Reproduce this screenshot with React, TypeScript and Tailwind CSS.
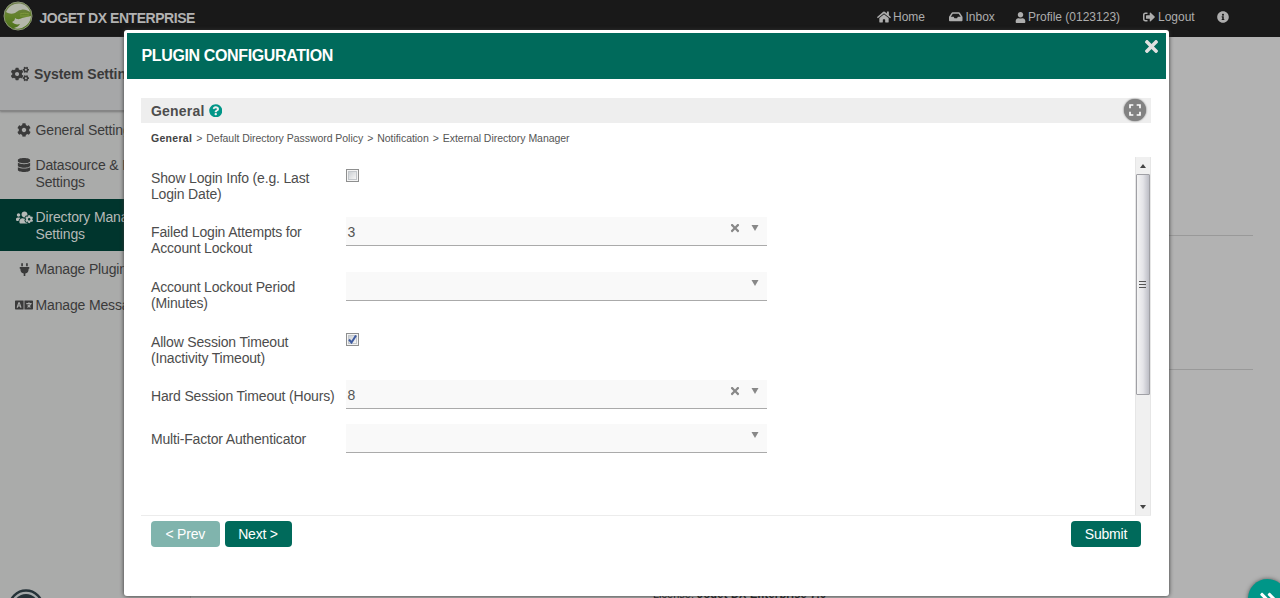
import type { ReactNode } from "react";
import {
  FaHome,
  FaInbox,
  FaUser,
  FaSignOutAlt,
  FaInfoCircle,
  FaCogs,
  FaCog,
  FaDatabase,
  FaUsersCog,
  FaPlug,
  FaLanguage,
  FaQuestionCircle,
  FaTimes,
  FaAngleDoubleRight,
} from "react-icons/fa";
import { MdFullscreen } from "react-icons/md";

function Logo() {
  return (
    <svg width="30" height="30" viewBox="0 0 30 30">
      <defs>
        <linearGradient id="ball" x1="0" y1="0" x2="0" y2="1">
          <stop offset="0" stopColor="#6f7d4c" />
          <stop offset="0.5" stopColor="#63822a" />
          <stop offset="1" stopColor="#4b701c" />
        </linearGradient>
      </defs>
      <circle cx="15" cy="15" r="14" fill="url(#ball)" stroke="#8c9678" strokeWidth="1" />
      <path d="M3 11C6 4 13 1.500 19 3c4 1 7 4 8 8-3-2-6-3-9-2-3 0-4 2-6 3-3 1-6 1-9-1z" fill="#b4b7aa" />
      <path d="M12 17c3 2 5 1 7 0 3-1 6-1 9-2 0 5-4 10-9 12-3 1-6 1-8 0 3-1 5-2 6-4-3 1-6 0-8-2 2-1 3-2 3-4z" fill="#b4b7aa" />
      <path d="M17 13c3-1 6-1 9 0M17 15h9" fill="none" stroke="#86a042" strokeWidth="0.8" />
    </svg>
  );
}

function TopBar() {
  return (
    <header className="flex h-[37px] shrink-0 items-center bg-[#191919] pr-[51px] text-[12px] text-[#adadad]">
      <div className="flex h-full w-[39.500px] shrink-0 items-start pl-[3px] pt-px">
        <Logo />
      </div>
      <h1 className="text-[14px] font-bold tracking-[-0.460px] text-[#b2b2b2]">JOGET DX ENTERPRISE</h1>
      <nav className="ml-auto flex items-center pb-[3px]">
        <span className="flex w-[72px] items-center gap-[2px]"><FaHome size={14} />Home</span>
        <span className="flex w-[66px] items-center gap-[3px]"><FaInbox size={13.500} />Inbox</span>
        <span className="flex w-[128px] items-center gap-[2px]"><FaUser size={11} />Profile (0123123)</span>
        <span className="flex w-[74px] items-center gap-[3px]"><FaSignOutAlt size={12} />Logout</span>
        <FaInfoCircle size={12} />
      </nav>
    </header>
  );
}

type MenuItem = { icon: ReactNode; lines: string[]; active?: boolean };

const menu: MenuItem[] = [
  { icon: <FaCog size={14} />, lines: ["General Settings"] },
  { icon: <FaDatabase size={14} />, lines: ["Datasource & Profile", "Settings"] },
  { icon: <FaUsersCog size={17} />, lines: ["Directory Manager", "Settings"], active: true },
  { icon: <FaPlug size={13} />, lines: ["Manage Plugins"] },
  { icon: <FaLanguage size={18} />, lines: ["Manage Messages"] },
];

function Sidebar() {
  return (
    <aside className="flex w-[191px] shrink-0 flex-col border-r border-[#999] bg-[#aaabaa] text-[14px] leading-[16.300px] tracking-[-0.150px] text-[#3a3a3a]">
      <div className="flex h-[74px] shrink-0 items-center gap-[5px] border-b border-[#858585] bg-[#a6a7a8] pl-[11px] pt-px font-bold tracking-[-0.050px] shadow-[0_1px_2px_#777]">
        <FaCogs size={18} />
        System Settings
      </div>
      <ul>
        {menu.map((item) => (
          <li
            key={item.lines[0]}
            className={
              item.active
                ? "flex bg-[#00352d] pt-[10.600px] pb-[8.800px] text-[#b5b9b7]"
                : "flex pt-[10.600px] pb-[8.800px]"
            }
          >
            <span className="ml-[12.500px] flex h-[16px] w-[23px] shrink-0 items-center justify-center">
              {item.icon}
            </span>
            <span className="flex flex-col whitespace-nowrap">
              {item.lines.map((line) => (
                <span key={line}>{line}</span>
              ))}
            </span>
          </li>
        ))}
      </ul>
      <div className="mt-auto flex h-[10px] justify-start overflow-hidden pl-[8px]">
        <svg width="36" height="36" viewBox="0 0 36 36" className="shrink-0">
          <circle cx="18" cy="19" r="16.500" fill="#a2a7a8" stroke="#253238" strokeWidth="2.500" />
          <circle cx="18" cy="19" r="13" fill="#253238" />
        </svg>
      </div>
    </aside>
  );
}

function Select({ value }: { value?: string }) {
  return (
    <div className="flex h-[29px] w-[421px] items-start border-b border-[#aaa] bg-[#f9f9f9] pl-[2px] text-[14px] text-[#555]">
      <span className="pt-[7px] leading-[17px]">{value}</span>
      <span className="ml-auto flex h-[22px] items-center pr-[8px]">
        {value && <FaTimes size={12} className="mr-[10px] text-[#888]" />}
        <svg width="8" height="6" viewBox="0 0 8 6"><path d="M0.500 0h7L4 6z" fill="#888" /></svg>
      </span>
    </div>
  );
}

function Checkbox({ checked }: { checked?: boolean }) {
  return (
    <span className="flex size-[13px] items-center justify-center border border-[#8e8f8f] bg-[#f4f4f4]">
      <span className="flex size-[9px] items-center justify-center border border-[#c3c7cb] bg-linear-to-br from-[#cdd1d5] to-[#f6f6f6]">
        {checked && (
          <svg width="9" height="9" viewBox="0 0 9 9" className="shrink-0">
            <path d="M1 4.500l2.500 3L8 .5" fill="none" stroke="#3f5ba0" strokeWidth="2" />
          </svg>
        )}
      </span>
    </span>
  );
}

function Row({ label, className, children }: { label: string[]; className: string; children: ReactNode }) {
  return (
    <div className={className}>
      <div className="flex w-[194.500px] shrink-0 flex-col whitespace-nowrap pt-[3px] tracking-[-0.170px]">
        {label.map((line) => (
          <span key={line}>{line}</span>
        ))}
      </div>
      {children}
    </div>
  );
}

function Scrollbar() {
  return (
    <div className="flex w-[16px] shrink-0 flex-col items-center border-x border-[#e6e6e6] bg-[#f0f0f0]">
      <div className="flex h-[17px] items-center">
        <svg width="6" height="4" viewBox="0 0 6 4"><path d="M0 4l3-4 3 4z" fill="#444" /></svg>
      </div>
      <div className="flex h-[221px] w-[14px] items-center justify-center rounded-[1px] border border-[#a0a0a5] bg-linear-to-r from-[#f4f4f4] via-[#e4e4e8] to-[#bdbec6] pr-px">
        <div className="flex w-[7px] flex-col gap-[2px]">
          <i className="h-px bg-[#555]" />
          <i className="h-px bg-[#555]" />
          <i className="h-px bg-[#555]" />
        </div>
      </div>
      <div className="mt-auto flex h-[16px] items-center">
        <svg width="6" height="4" viewBox="0 0 6 4"><path d="M0 0l3 4 3-4z" fill="#444" /></svg>
      </div>
    </div>
  );
}

function Dialog() {
  return (
    <section className="absolute left-[124px] top-[30px] z-10 flex h-[566px] w-[1045px] flex-col rounded-[3px] bg-white p-[3px] shadow-[0_0_4px_#333] text-[#4d4d4d]">
      <div className="flex h-[46px] shrink-0 items-center justify-between bg-[#006a5b] pl-[14.500px] pr-[5px] text-white">
        <h2 className="pb-px text-[16px] font-bold tracking-[-0.370px]">PLUGIN CONFIGURATION</h2>
        <FaTimes size={19} className="mb-[19px] text-[#e0e0e0]" />
      </div>
      <div className="mt-[19px] flex h-[25px] shrink-0 items-center bg-[#eee] ml-[14px] mr-[15px] pl-[10px] pr-[5px]">
        <h3 className="pt-px text-[14px] font-bold tracking-[0.200px]">General</h3>
        <FaQuestionCircle size={13.500} className="ml-[4px] text-[#009688]" />
        <span className="mb-[2px] ml-auto flex size-[22px] shrink-0 items-center justify-center rounded-full bg-[#828282] text-white shadow-[0_0_2px_#555]">
          <MdFullscreen size={20} className="shrink-0" />
        </span>
      </div>
      <div className="ml-[24px] mt-[9px] flex h-[13px] items-center gap-[4px] whitespace-nowrap text-[10.500px] leading-[13px] tracking-[-0.040px] text-[#555]">
        <b className="tracking-[0.300px] text-[#444]">General</b>
        <span>&gt;</span>
        <span>Default Directory Password Policy</span>
        <span>&gt;</span>
        <span>Notification</span>
        <span>&gt;</span>
        <span>External Directory Manager</span>
      </div>
      <div className="ml-[14px] mr-[15px] mt-[12px] flex h-[359px] shrink-0 border-b border-[#ececec]">
        <div className="flex grow flex-col pl-[10px] pt-[10px] text-[14px] leading-[16.300px]">
          <Row className="flex h-[50px]" label={["Show Login Info (e.g. Last", "Login Date)"]}>
            <div className="pt-[2px]"><Checkbox /></div>
          </Row>
          <Row className="flex h-[55px] [&>div:first-child]:pt-[7px]" label={["Failed Login Attempts for", "Account Lockout"]}>
            <Select value="3" />
          </Row>
          <Row className="flex h-[58px] [&>div:first-child]:pt-[7px]" label={["Account Lockout Period", "(Minutes)"]}>
            <Select />
          </Row>
          <Row className="flex h-[50px] [&>div:first-child]:pt-[4px]" label={["Allow Session Timeout", "(Inactivity Timeout)"]}>
            <div className="pt-[3px]"><Checkbox checked /></div>
          </Row>
          <Row className="flex h-[44px] [&>div:first-child]:pt-[8px]" label={["Hard Session Timeout (Hours)"]}>
            <Select value="8" />
          </Row>
          <Row className="flex h-[44px] [&>div:first-child]:pt-[7px]" label={["Multi-Factor Authenticator"]}>
            <Select />
          </Row>
        </div>
        <Scrollbar />
      </div>
      <div className="ml-[24px] mr-[25px] mt-[5px] flex gap-[5px] text-[14px] tracking-[-0.200px] text-white">
        <button className="h-[26px] w-[68.500px] rounded-[4px] bg-[#80b4ad]">&lt; Prev</button>
        <button className="h-[26px] w-[67px] rounded-[4px] bg-[#006a5b]">Next &gt;</button>
        <button className="ml-auto h-[26px] w-[70px] rounded-[4px] bg-[#006a5b]">Submit</button>
      </div>
    </section>
  );
}

export default function App() {
  return (
    <div className="relative flex h-[598px] w-[1280px] flex-col overflow-hidden bg-[#b2b2b2] font-['Liberation_Sans',Arial,sans-serif]">
      <TopBar />
      <div className="flex min-h-0 grow">
        <Sidebar />
        <main className="flex grow flex-col pr-[27px]">
          <div className="h-[199px] shrink-0 border-b border-[#999]" />
          <div className="h-[134px] shrink-0 border-b border-[#999]" />
          <p className="mt-[217px] whitespace-nowrap pl-[462px] text-[11px] leading-[14px] text-[#222]">
            License: <b className="tracking-[0.250px]">Joget DX Enterprise 7.0</b>
          </p>
        </main>
      </div>
      <Dialog />
      <div className="absolute left-[1248px] top-[579px] flex size-[39px] items-center justify-center rounded-full bg-[#009688] text-white shadow-[0_0_4px_#555]">
        <FaAngleDoubleRight size={20} />
      </div>
    </div>
  );
}
